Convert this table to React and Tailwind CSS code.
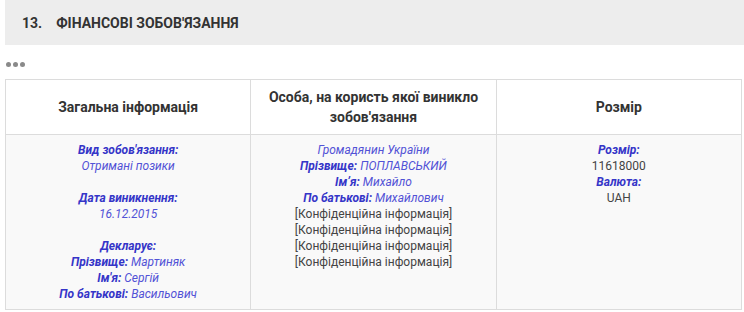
import React from "react";

const Label = ({ children }) => (
  <span className="font-bold italic text-[#3535c8]">{children}</span>
);

const Val = ({ children }) => (
  <span className="italic text-[#5252d6]">{children}</span>
);

function App() {
  const secret = "[Конфіденційна інформація]";

  return (
    <div className="w-[744px] h-[312px] overflow-hidden bg-white font-['Roboto',sans-serif] text-[#333]">
      {/* section title */}
      <div className="ml-[5px] h-[45px] bg-[#ededed] flex items-center pl-[17px] pt-[2px]">
        <span className="text-[14px] font-bold uppercase text-[#333]">
          13.<span className="inline-block w-[14px]" />Фінансові зобов'язання
        </span>
      </div>

      <div className="ml-[6px] h-[34px] pt-[4px] flex items-center gap-[2px]">
        <span className="w-[5px] h-[5px] rounded-full bg-[#8a8a8a]" />
        <span className="w-[5px] h-[5px] rounded-full bg-[#8a8a8a]" />
        <span className="w-[5px] h-[5px] rounded-full bg-[#8a8a8a]" />
      </div>

      <table className="ml-[5px] w-[737px] border-collapse table-fixed">
        <thead>
          <tr className="h-[55px]">
            <th className="border border-[#dcdcdc] px-3 text-[14px] leading-[20px] font-bold text-[#333]">
              Загальна інформація
            </th>
            <th className="border border-[#dcdcdc] px-3 text-[14px] leading-[20px] font-bold text-[#333]">
              Особа, на користь якої виникло зобов'язання
            </th>
            <th className="border border-[#dcdcdc] px-3 text-[14px] leading-[20px] font-bold text-[#333]">
              Розмір
            </th>
          </tr>
        </thead>
        <tbody>
          <tr className="bg-[#f9f9f9] text-[12px] leading-[16px] align-top">
            <td className="border border-[#dcdcdc] pt-[7px] pb-[7px] text-center">
              <div><Label>Вид зобов'язання:</Label></div>
              <div><Val>Отримані позики</Val></div>
              <div className="h-[16px]" />
              <div><Label>Дата виникнення:</Label></div>
              <div><Val>16.12.2015</Val></div>
              <div className="h-[16px]" />
              <div><Label>Декларує:</Label></div>
              <div><Label>Прізвище:</Label> <Val>Мартиняк</Val></div>
              <div><Label>Ім'я:</Label> <Val>Сергій</Val></div>
              <div><Label>По батькові:</Label> <Val>Васильович</Val></div>
            </td>
            <td className="border border-[#dcdcdc] pt-[7px] pb-[7px] text-center">
              <div><Val>Громадянин України</Val></div>
              <div><Label>Прізвище:</Label> <Val>ПОПЛАВСЬКИЙ</Val></div>
              <div><Label>Ім’я:</Label> <Val>Михайло</Val></div>
              <div><Label>По батькові:</Label> <Val>Михайлович</Val></div>
              <div className="text-[#444]">{secret}</div>
              <div className="text-[#444]">{secret}</div>
              <div className="text-[#444]">{secret}</div>
              <div className="text-[#444]">{secret}</div>
            </td>
            <td className="border border-[#dcdcdc] pt-[7px] pb-[7px] text-center">
              <div><Label>Розмір:</Label></div>
              <div className="text-[#444]">11618000</div>
              <div><Label>Валюта:</Label></div>
              <div className="text-[#444]">UAH</div>
            </td>
          </tr>
        </tbody>
      </table>
    </div>
  );
}

export default App;
